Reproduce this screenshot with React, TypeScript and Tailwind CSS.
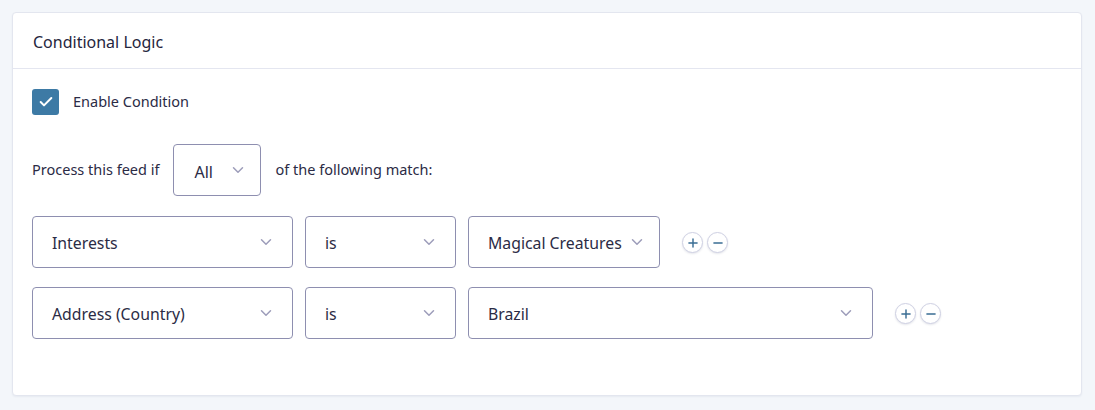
import { Check, ChevronDown, Plus, Minus } from 'lucide-react'

function Select({ value, width }: { value: string; width: string }) {
  return (
    <div
      className={`flex h-[52px] ${width} shrink-0 items-center justify-between gap-[6px] rounded-[4px] border border-[#8e8fb0] bg-white pl-[19px] pr-[17px] text-[15.8px] text-[#2b2b45]`}
    >
      <span className="whitespace-nowrap pt-[3px]">{value}</span>
      <ChevronDown className="h-[18px] w-[18px] shrink-0 text-[#9d9dba]" strokeWidth={2} />
    </div>
  )
}

function RoundButton({ children }: { children: React.ReactNode }) {
  return (
    <button className="flex h-[21px] w-[21px] items-center justify-center rounded-full border border-[#cfd1e3] bg-white text-[#3a6d94] shadow-[0_1px_2px_rgba(30,40,90,0.12)]">
      {children}
    </button>
  )
}

export default function App() {
  const rules = [
    { field: 'Interests', value: 'Magical Creatures', valueWidth: 'w-[192px]' },
    { field: 'Address (Country)', value: 'Brazil', valueWidth: 'w-[405px]' },
  ]

  return (
    <div
      className="min-h-[410px] bg-[#f3f6fa] px-[12px] pt-[12px]"
      style={{ fontFamily: '"Noto Sans", "Open Sans", sans-serif' }}
    >
      <div className="h-[384px] w-[1070px] rounded-[4px] border border-[#e3e6ef] bg-white shadow-[0_1px_2px_rgba(40,50,100,0.06)]">
        <div className="flex h-[56px] items-center border-b border-[#e4e6f0] px-[20px] pt-[2px] text-[16px] text-[#25253d]">
          Conditional Logic
        </div>

        <div className="px-[19px] pt-[20px]">
          <label className="flex items-center gap-[14px] text-[14.5px] text-[#2b2b45]">
            <span className="flex h-[26px] w-[27px] items-center justify-center rounded-[3px] bg-[#3d7aa5]">
              <Check className="h-[16px] w-[16px] text-white" strokeWidth={3} />
            </span>
            Enable Condition
          </label>

          <div className="mt-[29px] flex items-center gap-[14px] text-[14.5px] text-[#2b2b45]">
            <span>Process this feed if</span>
            <div className="flex h-[52px] w-[88px] items-center justify-between rounded-[4px] border border-[#8e8fb0] pl-[20px] pr-[13px] text-[16px]">
              <span className="pt-[3px]">All</span>
              <ChevronDown className="h-[18px] w-[18px] text-[#9d9dba]" strokeWidth={2} />
            </div>
            <span>of the following match:</span>
          </div>

          <div className="mt-[20px] flex flex-col gap-[19px]">
            {rules.map((rule) => (
              <div key={rule.field} className="flex items-center gap-[12px]">
                <Select value={rule.field} width="w-[261px]" />
                <Select value="is" width="w-[151px]" />
                <Select value={rule.value} width={rule.valueWidth} />
                <div className="ml-[10px] flex items-center gap-[4px] pt-[1px]">
                  <RoundButton>
                    <Plus className="h-[14px] w-[14px]" strokeWidth={2.5} />
                  </RoundButton>
                  <RoundButton>
                    <Minus className="h-[14px] w-[14px]" strokeWidth={2.5} />
                  </RoundButton>
                </div>
              </div>
            ))}
          </div>
        </div>
      </div>
    </div>
  )
}
